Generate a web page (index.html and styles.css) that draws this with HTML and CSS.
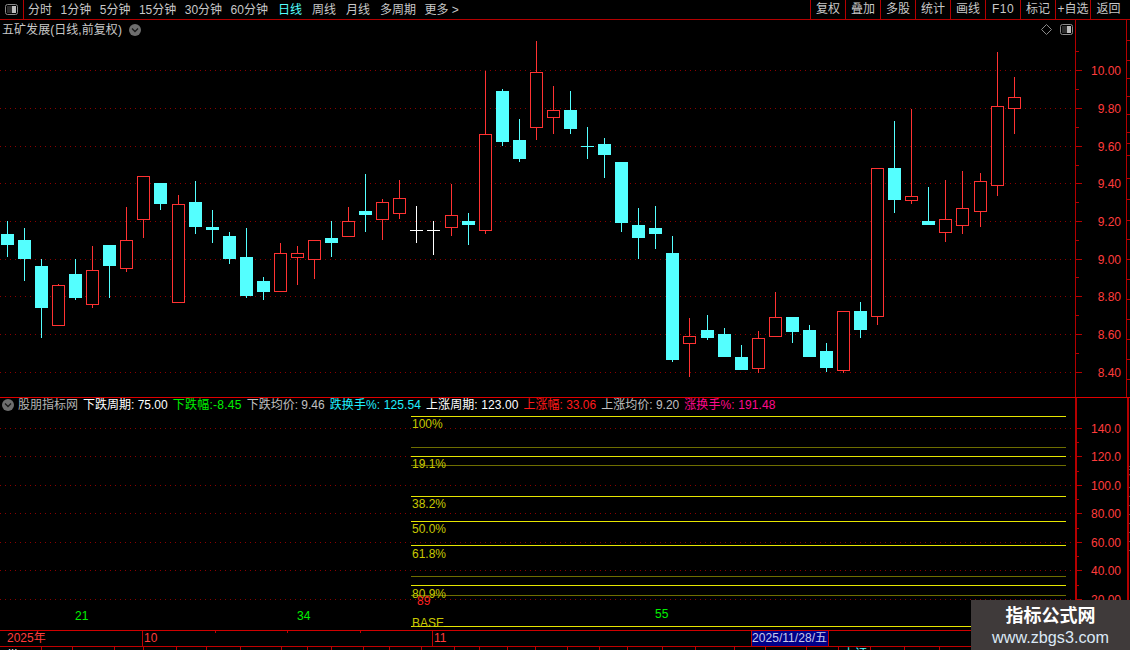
FILE: index.html
```html
<!DOCTYPE html>
<html lang="zh-CN">
<head>
<meta charset="utf-8">
<title>五矿发展</title>
<link rel="stylesheet" href="styles.css">
</head>
<body>
<div class="page">
  <header class="toolbar">
    <div class="tool-toggle">
      <svg class="panel-icon" width="13" height="12" viewBox="0 0 13 12"><rect x="0.5" y="0.5" width="12" height="10" rx="2" class="pi-frame"/><rect x="2" y="2" width="5" height="7" class="pi-dark"/><rect x="7" y="2" width="4" height="7" class="pi-fill"/></svg>
    </div>
    <nav class="periods">
      <span>分时</span><span>1分钟</span><span>5分钟</span><span>15分钟</span><span>30分钟</span><span>60分钟</span><span class="active wide">日线</span><span class="wide">周线</span><span class="wide">月线</span><span>多周期</span><span>更多 &gt;</span>
    </nav>
    <nav class="actions">
      <span>复权</span><span>叠加</span><span>多股</span><span>统计</span><span>画线</span><span class="f10">F10</span><span>标记</span><span>+自选</span><span class="last">返回</span>
    </nav>
  </header>

  <section class="main-panel">
    <div class="plot">
      <svg class="chart" width="1075" height="377" viewBox="0 20 1075 377">
        <path class="grid" d="M0 70.5H1075M0 108.5H1075M0 146.5H1075M0 183.5H1075M0 221.5H1075M0 259.5H1075M0 296.5H1075M0 334.5H1075M0 372.5H1075"/>
        <path class="wick-up" d="M58.5 284V326M92.5 246V308M126.5 207V272M143.5 176V238M178.5 195V303M280.5 243V292M297.5 246V285M314.5 240V279M348.5 207V237M382.5 199V240M399.5 180V219M451.5 184V236M485.5 71V234M536.5 41V140M553.5 86V134M689.5 318V377M758.5 331V373M775.5 292V337M843.5 311V373M877.5 168V325M911.5 109V204M945.5 180V242M962.5 171V234M980.5 173V227M997.5 52V196M1014.5 77V134"/>
        <path class="wick-down" d="M7.5 221V257M24.5 228V281M41.5 259V338M75.5 259V300M109.5 245V298M160.5 183V210M195.5 181V234M212.5 210V243M229.5 232V264M246.5 228V298M263.5 277V300M331.5 221V257M365.5 174V232M468.5 213V245M502.5 89V146M519.5 119V162M570.5 91V134M587.5 127V159M581 146.5H594M604.5 138V178M621.5 162V232M638.5 208V259M655.5 206V249M672.5 236V362M707.5 315V340M724.5 328V357M741.5 345V370M792.5 317V343M809.5 325V357M826.5 343V372M860.5 302V338M894.5 121V213M928.5 187V225"/>
        <path class="doji" d="M416.5 206V243M410 230.5H423M433.5 221V255M427 230.5H440"/>
        <path class="body-up" d="M52.5 285.5h12V325.5h-12zM86.5 270.5h12V304.5h-12zM120.5 240.5h12V268.5h-12zM137.5 176.5h12V219.5h-12zM172.5 204.5h12V302.5h-12zM274.5 253.5h12V291.5h-12zM291.5 253.5h12V257.5h-12zM308.5 240.5h12V259.5h-12zM342.5 221.5h12V236.5h-12zM376.5 202.5h12V219.5h-12zM393.5 198.5h12V213.5h-12zM445.5 215.5h12V227.5h-12zM479.5 134.5h12V230.5h-12zM530.5 72.5h12V127.5h-12zM547.5 110.5h12V117.5h-12zM683.5 336.5h12V343.5h-12zM752.5 338.5h12V368.5h-12zM769.5 317.5h12V336.5h-12zM837.5 311.5h12V370.5h-12zM871.5 168.5h12V316.5h-12zM905.5 196.5h12V200.5h-12zM939.5 219.5h12V232.5h-12zM956.5 208.5h12V225.5h-12zM974.5 181.5h12V211.5h-12zM991.5 106.5h12V185.5h-12zM1008.5 97.5h12V108.5h-12z"/>
        <path class="body-down" d="M1 234h13V245h-13zM18 240h13V259h-13zM35 266h13V308h-13zM69 274h13V298h-13zM103 245h13V266h-13zM154 183h13V204h-13zM189 202h13V227h-13zM206 227h13V230h-13zM223 236h13V259h-13zM240 257h13V296h-13zM257 281h13V292h-13zM325 238h13V243h-13zM359 211h13V215h-13zM462 221h13V225h-13zM496 91h13V142h-13zM513 140h13V159h-13zM564 110h13V129h-13zM598 144h13V155h-13zM615 162h13V223h-13zM632 225h13V238h-13zM649 228h13V234h-13zM666 253h13V360h-13zM701 330h13V338h-13zM718 334h13V357h-13zM735 357h13V370h-13zM786 317h13V332h-13zM803 330h13V357h-13zM820 351h13V368h-13zM854 311h13V330h-13zM888 168h13V200h-13zM922 221h13V225h-13z"/>
      </svg>
      <div class="chart-title">
        <span>五矿发展(日线,前复权)</span>
        <svg class="chevron" width="12" height="12" viewBox="0 0 12 12"><circle cx="6" cy="6" r="6" class="chev-disc"/><path d="M3 4.5 6 7.5 9 4.5" class="chev-mark"/></svg>
      </div>
      <div class="chart-tools">
        <svg width="11" height="11" viewBox="0 0 11 11"><path d="M5.5.5 10.5 5.5 5.5 10.5.5 5.5z" class="diamond"/></svg>
        <svg class="panel-icon" width="13" height="12" viewBox="0 0 13 12"><rect x="0.5" y="0.5" width="12" height="10" rx="2" class="pi-frame"/><rect x="2" y="2" width="5" height="7" class="pi-dark"/><rect x="7" y="2" width="4" height="7" class="pi-fill"/></svg>
      </div>
    </div>
    <svg class="axis" width="50" height="377" viewBox="1076 20 50 377">
      <path class="tick" d="M1076 70.5h6M1076 108.5h6M1076 146.5h6M1076 183.5h6M1076 221.5h6M1076 259.5h6M1076 296.5h6M1076 334.5h6M1076 372.5h6M1076 89.5h3M1076 127.5h3M1076 165.5h3M1076 202.5h3M1076 240.5h3M1076 277.5h3M1076 315.5h3M1076 353.5h3M1076 51.5h3"/>
      <g class="axis-label">
        <text x="1121" y="75">10.00</text><text x="1121" y="113">9.80</text><text x="1121" y="151">9.60</text><text x="1121" y="188">9.40</text><text x="1121" y="226">9.20</text><text x="1121" y="264">9.00</text><text x="1121" y="301">8.80</text><text x="1121" y="339">8.60</text><text x="1121" y="377">8.40</text>
      </g>
    </svg>
    <svg class="strip" width="3" height="377" viewBox="1127 20 3 377">
      <path class="strip-tick" d="M1127 40.5h3M1127 60.5h3M1127 78.5h3M1127 96.5h3M1127 114.5h3M1127 132.5h3M1127 143.5h3M1127 155.5h3M1127 178.5h3M1127 199.5h3M1127 220.5h3M1127 239.5h3M1127 259.5h3M1127 279.5h3M1127 299.5h3M1127 319.5h3M1127 339.5h3M1127 359.5h3M1127 379.5h3"/>
    </svg>
  </section>

  <section class="sub-panel">
    <div class="plot">
      <svg class="chart" width="1075" height="232" viewBox="0 398 1075 232">
        <path class="grid" d="M0 428.5H1075M0 456.5H1075M0 485.5H1075M0 513.5H1075M0 542.5H1075M0 570.5H1075M0 599.5H1075"/>
        <path class="fib-dim" d="M411 447.5H1066M411 465.5H1066M411 576.5H1066M411 595.5H1066"/>
        <path class="fib" d="M411 416.5H1066M411 456.5H1066M411 496.5H1066M411 521.5H1066M411 545.5H1066M411 585.5H1066M411 626.5H1075"/>
        <g class="fib-label">
          <text x="412" y="428">100%</text><text x="412" y="468">19.1%</text><text x="412" y="508">38.2%</text><text x="412" y="533">50.0%</text><text x="412" y="558">61.8%</text><text x="412" y="598">80.9%</text><text x="412" y="627">BASE</text>
        </g>
        <text class="fib-red" x="417" y="605">89</text>
        <g class="fib-green">
          <text x="75" y="620">21</text><text x="297" y="620">34</text><text x="655" y="618">55</text>
        </g>
      </svg>
      <div class="legend">
        <svg class="chevron" width="12" height="12" viewBox="0 0 12 12"><circle cx="6" cy="6" r="6" class="chev-disc"/><path d="M3 4.5 6 7.5 9 4.5" class="chev-mark"/></svg>
        <span class="lg-name">股朋指标网</span>
        <span class="lg-white">下跌周期: 75.00</span>
        <span class="lg-green">下跌幅:-8.45</span>
        <span class="lg-grey">下跌均价: 9.46</span>
        <span class="lg-cyan">跌换手%: 125.54</span>
        <span class="lg-white lg-wide">上涨周期: 123.00</span>
        <span class="lg-red">上涨幅: 33.06</span>
        <span class="lg-grey">上涨均价: 9.20</span>
        <span class="lg-pink">涨换手%: 191.48</span>
      </div>
    </div>
    <svg class="axis" width="50" height="232" viewBox="1077 398 50 232">
      <path class="tick" d="M1077 428.5h5M1077 456.5h5M1077 485.5h5M1077 513.5h5M1077 542.5h5M1077 570.5h5M1077 599.5h5M1077 442.5h2M1077 471.5h2M1077 499.5h2M1077 528.5h2M1077 556.5h2M1077 585.5h2M1077 613.5h2"/>
      <g class="axis-label">
        <text x="1121" y="433">140.0</text><text x="1121" y="461">120.0</text><text x="1121" y="490">100.0</text><text x="1121" y="518">80.00</text><text x="1121" y="547">60.00</text><text x="1121" y="575">40.00</text><text x="1121" y="604">20.00</text>
      </g>
    </svg>
    <svg class="strip" width="2" height="232" viewBox="1128 398 2 232">
      <path class="strip-grey" d="M1128 419.5h2M1128 425.5h2M1128 434.5h2M1128 461.5h2M1128 479.5h2M1128 497.5h2M1128 515.5h2M1128 533.5h2M1128 551.5h2M1128 569.5h2M1128 587.5h2"/>
      <path class="strip-tick" d="M1128 437.5h2"/>
    </svg>
  </section>

  <section class="timebar">
    <div class="tcell year">2025年</div>
    <div class="tcell month-10">10
      <div class="tticks"><i></i><i></i><i></i><i></i></div>
    </div>
    <div class="tcell month-11">11</div>
    <div class="cursor-date">2025/11/28/五</div>
  </section>

  <footer class="status">
    <span class="st-white">|||</span><span></span><span class="st-white">  .</span><span></span><span></span><span></span><span></span><span></span><span></span><span></span><span></span><span></span><span></span><span></span><span></span><span></span><span></span><span></span><span></span><span></span><span></span><span></span><span></span><span></span><span></span><span class="st-white">      .</span><span class="st-cyan">上证</span><span></span><span></span><span></span>
  </footer>

  <aside class="watermark">
    <strong>指标公式网</strong>
    <span>www.zbgs3.com</span>
  </aside>
</div>
</body>
</html>
```
FILE: styles.css
```css
* { box-sizing: border-box; }
html, body { margin: 0; height: 100%; background: #000; overflow: hidden; }
body { font: 12px/14px "Liberation Sans", "Noto Sans CJK SC", sans-serif; color: #c8c8c8; }
svg { display: block; }
.page { position: relative; width: 1130px; height: 650px; display: flex; flex-direction: column; overflow: hidden; }

/* toolbar */
.toolbar { height: 20px; display: flex; border-bottom: 1px solid #b40000; }
.tool-toggle { width: 24px; padding: 4px 0 0 5px; border-right: 1px solid #b40000; }
.periods { display: flex; align-items: center; gap: 8.5px; padding-left: 4px; }
.periods .active { color: #54ffff; margin-left: 1.5px; }
.periods .wide { margin-right: 1.5px; }
.actions { margin-left: auto; width: 320px; display: flex; border-left: 1px solid #b40000; }
.actions span { width: 35px; text-align: center; line-height: 18px; border-right: 1px solid #b40000; }
.actions .f10 { letter-spacing: .5px; }
.actions .last { flex: 1; border-right: 0; padding-right: 4px; }
.pi-frame { fill: #000; stroke: #8a8a8a; }
.pi-dark { fill: #2c2c2c; }
.pi-fill { fill: #bdbdbd; }

/* panels */
.main-panel { height: 378px; display: flex; border-bottom: 1px solid #e00000; }
.sub-panel { height: 233px; display: flex; border-bottom: 1px solid #d00000; }
.plot { position: relative; width: 1075px; flex: none; }
.main-panel .axis { border-left: 1px solid #b40000; width: 51px; flex: none; }
.sub-panel .axis { border-left: 2px solid #b40000; width: 52px; flex: none; }
.main-panel .strip { border-left: 1px solid #b40000; width: 4px; flex: none; }
.sub-panel .strip { border-left: 2px solid #b40000; width: 3px; flex: none; }

.chart path { fill: none; shape-rendering: crispEdges; }
.grid { stroke: #8c0000; stroke-dasharray: 1 4; }
.chart .wick-up { stroke: #ff3232; }
.chart .wick-down { stroke: #54ffff; }
.chart .doji { stroke: #fff; }
.chart .body-up { stroke: #ff3232; fill: #000; }
.chart .body-down { fill: #54ffff; }
.chart .fib { stroke: #e6e600; }
.chart .fib-dim { stroke: #6e6e00; }
.fib-label { fill: #c8c800; }
.fib-red { fill: #ff2020; }
.fib-green { fill: #00f000; }

.axis path, .strip path { shape-rendering: crispEdges; }
.tick { stroke: #b40000; fill: none; }
.axis-label { fill: #ff3c3c; text-anchor: end; font-size: 12px; }
.strip-tick { stroke: #b40000; }
.strip-grey { stroke: #9a9a9a; }

/* overlays on the plots */
.chart-title { position: absolute; left: 2px; top: 2px; display: flex; align-items: center; gap: 7px; height: 15px; letter-spacing: .05px; }
.chart-tools { position: absolute; right: 2px; top: 4px; display: flex; align-items: flex-start; gap: 8px; }
.diamond { fill: none; stroke: #8a8a8a; }
.chev-disc { fill: #6e6e6e; }
.chev-mark { fill: none; stroke: #1a1a1a; stroke-width: 1.3; }
.legend { position: absolute; left: 2px; top: 0; height: 14px; display: flex; align-items: center; white-space: nowrap; gap: 5px; }
.lg-name { color: #b4b4b4; margin-left: -1px; }
.lg-white { color: #fff; }
.lg-green { color: #00f000; letter-spacing: .25px; }
.lg-grey { color: #c0c0c0; }
.lg-cyan { color: #20f0ff; letter-spacing: .1px; }
.lg-wide { letter-spacing: .1px; }
.lg-red { color: #ff1a1a; }
.lg-pink { color: #ff0a8c; letter-spacing: .1px; }

/* time axis */
.timebar { position: relative; height: 16px; display: flex; border-bottom: 1px solid #c00000; color: #ff3c3c; }
.tcell { position: relative; line-height: 15px; padding-left: 1px; border-right: 1px solid #c00000; }
.year { width: 143px; padding-left: 7px; }
.month-10 { width: 290px; }
.month-11 { flex: 1; border-right: 0; }
.tticks { position: absolute; inset: 0 0 auto 0; display: flex; }
.tticks i { flex: 1; height: 2px; border-right: 1px solid #c00000; }
.tticks i:last-child { border-right: 0; }
.cursor-date { position: absolute; left: 751px; top: 0; width: 78px; height: 15px; padding-left: 0; line-height: 14px; background: #000088; color: #c8c8e8; border: 1px solid #c00000; border-top: 0; border-bottom: 0; white-space: nowrap; letter-spacing: .05px; }

/* status bar (mostly cut off by the window edge) */
.status { flex: 1; display: grid; grid-template-columns: 42px 31px 42px 29px 33px 30px 34px 41px 26px 24px 32px 26px 32px 33px 25px 28px 28px 32px 32px 28px 35px 33px 39px 31px 41px 32px 32px 34px 35px 35px; overflow: hidden; }
.status span { border-right: 1px solid #c00000; height: 3px; overflow: hidden; white-space: pre; line-height: 14px; }
.st-white { color: #fff; padding-left: 8px; }
.st-cyan { color: #54ffff; padding-left: 4px; }

/* watermark */
.watermark { position: absolute; left: 971px; top: 600px; width: 159px; height: 50px; background: #3f3a3a; display: flex; flex-direction: column; align-items: center; padding-top: 6px; color: #fff; }
.watermark strong { font-size: 18px; line-height: 20px; }
.watermark span { font-size: 16.2px; line-height: 20px; color: #dbe8f5; margin-top: 1px; }
```
